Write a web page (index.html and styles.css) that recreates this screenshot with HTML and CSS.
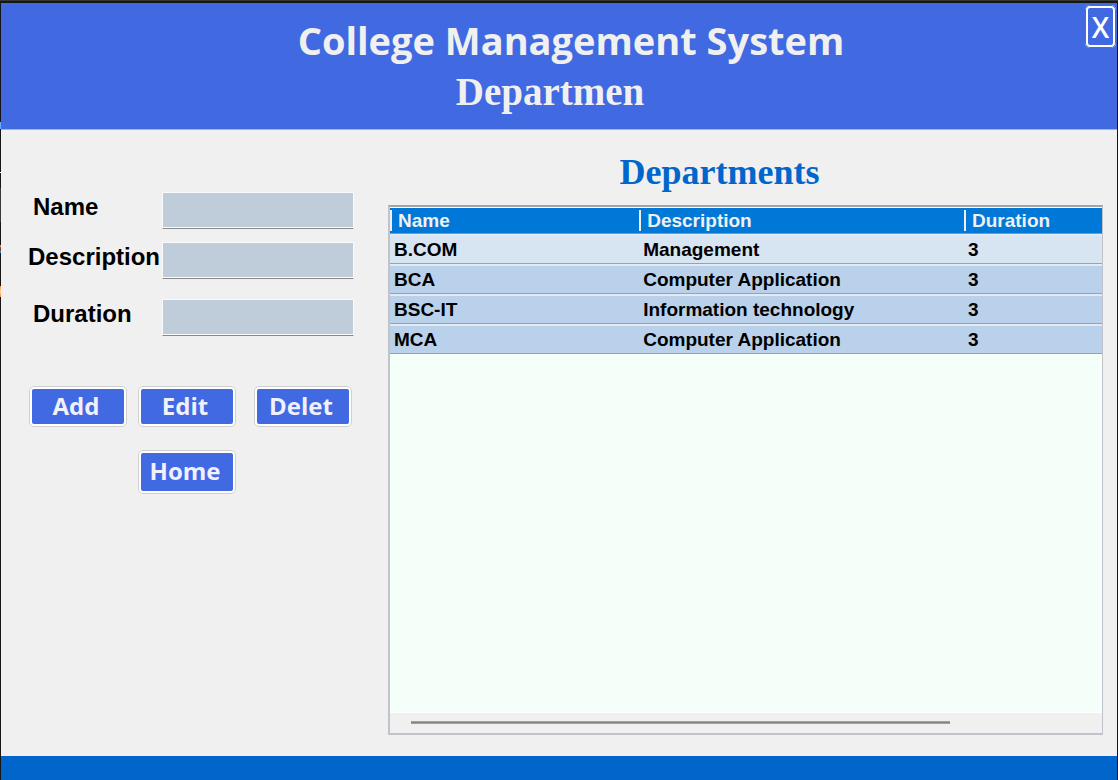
FILE: index.html
```html
<!DOCTYPE html>
<html lang="en">
<head>
<meta charset="utf-8">
<title>College Management System</title>
<link rel="stylesheet" href="styles.css">
</head>
<body>
<div class="window">
  <header class="banner">
    <div class="banner-titles">
      <h1 class="banner-title">College Management System</h1>
      <p class="banner-subtitle">Departmen</p>
    </div>
    <button class="close" type="button" aria-label="Close">X</button>
  </header>
  <main class="content">
    <form class="editor">
      <div class="fields">
        <div class="field">
          <label class="field-label" for="name">Name</label>
          <input class="field-input" id="name" type="text">
        </div>
        <div class="field">
          <label class="field-label field-label-wide" for="description">Description</label>
          <input class="field-input" id="description" type="text">
        </div>
        <div class="field field-spaced">
          <label class="field-label" for="duration">Duration</label>
          <input class="field-input" id="duration" type="text">
        </div>
      </div>
      <div class="actions">
        <button class="action" type="button">Add</button>
        <button class="action" type="button">Edit</button>
        <button class="action action-last" type="button">Delet</button>
        <button class="action action-home" type="button">Home</button>
      </div>
    </form>
    <section class="listing">
      <h2 class="listing-title">Departments</h2>
      <div class="grid">
        <table class="table">
          <colgroup>
            <col class="col-name">
            <col class="col-description">
            <col class="col-duration">
          </colgroup>
          <thead>
            <tr><th scope="col">Name</th><th scope="col">Description</th><th scope="col">Duration</th></tr>
          </thead>
          <tbody>
            <tr class="current"><td>B.COM</td><td>Management</td><td>3</td></tr>
            <tr><td>BCA</td><td>Computer Application</td><td>3</td></tr>
            <tr><td>BSC-IT</td><td>Information technology</td><td>3</td></tr>
            <tr><td>MCA</td><td>Computer Application</td><td>3</td></tr>
          </tbody>
        </table>
        <div class="scrollbar"><div class="scrollbar-thumb"></div></div>
      </div>
    </section>
  </main>
  <footer class="bottom-bar"></footer>
</div>
</body>
</html>
```
FILE: styles.css
```css
* {
  box-sizing: border-box;
}

body {
  margin: 0;
  background: #161616;
  font-family: "Liberation Sans", Arial, sans-serif;
}

/* Window frame: the dark desktop shows as a thin edge on the sides and top */
.window {
  display: flex;
  flex-direction: column;
  min-height: 100vh;
  padding: 3px 1px 0;
  background:
    linear-gradient(#353833, #353833) 0 0 / 100% 1px no-repeat,
    linear-gradient(#67b0ff, #67b0ff) 0 122px / 1px 7px no-repeat,
    linear-gradient(#ffffff, #ffffff) 0 172px / 1px 1px no-repeat,
    linear-gradient(#3a3a3a, #3a3a3a) 0 188px / 1px 34px no-repeat,
    linear-gradient(#f0b070, #6a2a10, #40a0e0) 0 245px / 1px 8px no-repeat,
    linear-gradient(#e89038, #ffd8a0, #e89038) 0 286px / 1px 11px no-repeat,
    #161616;
}

.banner {
  position: relative;
  min-height: 127px;
  padding-top: 10px;
  background: #4169e1;
  border-bottom: 1px solid #9db1ef;
  color: #f0f0f0;
}

.banner-titles {
  display: flex;
  flex-direction: column;
  align-items: center;
}

.banner-title {
  margin: 0;
  padding-left: 24px;
  font: 700 38px/54px "Open Sans", "Noto Sans", sans-serif;
}

.banner-subtitle {
  margin: 0;
  padding-right: 18px;
  font: 700 39px/50px "Liberation Serif", serif;
}

.close {
  position: absolute;
  top: 2px;
  right: 1px;
  width: 31px;
  height: 43px;
  padding: 0;
  background: #4169e1;
  border: 3px solid #ffffff;
  border-radius: 5px;
  outline: 1px solid #1a7fe0;
  outline-offset: -1px;
  color: #ffffff;
  font: 600 28px/36px "Open Sans", "Noto Sans", sans-serif;
}

.content {
  display: grid;
  grid-template-columns: 387px 1fr;
  flex: 1;
  padding-right: 14px;
  padding-bottom: 21px;
  background: #f0f0f0;
}

.editor {
  padding: 62px 34px 0 27px;
}

.fields {
  display: flex;
  flex-direction: column;
  gap: 13px;
}

.field {
  display: grid;
  grid-template-columns: 134px 1fr;
  align-items: start;
}

.field-spaced {
  padding-top: 7px;
}

.field-label {
  padding-left: 5px;
  color: #000000;
  font-size: 24px;
  font-weight: 700;
  line-height: 30px;
}

.field-label-wide {
  padding-left: 0;
}

.field-input {
  width: 100%;
  height: 37px;
  padding: 0 6px;
  background: #bfccda;
  border: 1px solid #fafafa;
  border-bottom: 1px solid #8c8888;
  border-radius: 0;
  box-shadow: inset 0 -1px #fafafa;
  font: 400 22px/30px "Liberation Sans", Arial, sans-serif;
}

.actions {
  display: grid;
  grid-template-columns: 98px 98px 98px;
  column-gap: 11px;
  row-gap: 23px;
  padding: 50px 0 0 1px;
}

.action {
  height: 41px;
  padding: 0 4px 2px 0;
  background: #4169e1;
  border: 3px solid #ffffff;
  border-radius: 5px;
  outline: 1px solid #cfcfcf;
  outline-offset: -1px;
  color: #f0f0ff;
  font: 700 24px/32px "Open Sans", "Noto Sans", sans-serif;
}

.action-last {
  margin: 0 -7px 0 7px;
}

.action-home {
  grid-column: 2;
  height: 44px;
}

.listing {
  display: flex;
  flex-direction: column;
  min-width: 0;
}

.listing-title {
  margin: 0;
  padding: 21px 52px 12px 0;
  color: #0066cc;
  font: 700 36px/42px "Liberation Serif", serif;
  text-align: center;
}

.grid {
  display: flex;
  flex: 1;
  flex-direction: column;
  background: #f5fffa;
  border: 2px solid #c2c2ca;
  border-top-color: #a3a3ab;
  border-right-width: 1px;
}

.table {
  width: 100%;
  border-collapse: separate;
  border-spacing: 0;
  table-layout: fixed;
}

.col-name {
  width: 35%;
}

.col-duration {
  width: 138px;
}

.table th,
.table td {
  font-size: 19px;
  font-weight: 700;
  text-align: left;
}

.table th {
  padding: 1px 8px 0;
  background: linear-gradient(#f0f0f0, #f0f0f0) 0 2px / 2px 21px no-repeat, #0078d7;
  border-top: 1px solid #ffffff;
  border-bottom: 1px solid #7b98b5;
  color: #f0f0f0;
  line-height: 24px;
}

.table td {
  padding: 1px 4px 0;
  background: #b9d1ea;
  border-top: 2px solid #e4eaf1;
  border-bottom: 1px solid #a0a0a0;
  color: #000000;
  line-height: 26px;
}

.table .current td {
  background: #d7e4f2;
}

.scrollbar {
  margin-top: auto;
  padding: 8px 0 9px 21px;
  background: #f0f0f0;
  border-top: 1px solid #ffffff;
}

.scrollbar-thumb {
  width: 78%;
  height: 3px;
  background: #858585;
  border: solid #a0a0a0;
  border-width: 1px 0;
}

.bottom-bar {
  height: 24px;
  background: #0066cc;
}
```
